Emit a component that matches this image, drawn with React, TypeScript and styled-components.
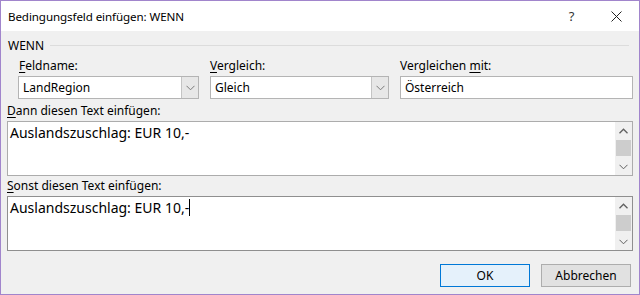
import styled, { createGlobalStyle } from "styled-components"

const GlobalStyle = createGlobalStyle`
    html, body {
        margin: 0;
        padding: 0;
        background: #ffffff;
    }
    * {
        box-sizing: border-box;
    }
`

// JANELA
const Janela = styled.div`
    width: 640px;
    height: 295px;
    border: 1px solid #a185cc;
    background-color: #f0f0f0;
    display: flex;
    flex-direction: column;
    font-family: 'Noto Sans', 'Open Sans', sans-serif;
    font-size: 12px;
    color: #000;
    overflow: hidden;
`
const BarraTitulo = styled.div`
    height: 30px;
    flex-shrink: 0;
    background-color: #fff;
    display: flex;
    align-items: center;
    padding-left: 7px;
`
const Titulo = styled.div`
    flex: 1;
    font-size: 11.6px;
    letter-spacing: -0.1px;
`
const BotaoTitulo = styled.div`
    width: 45px;
    height: 30px;
    display: flex;
    align-items: center;
    justify-content: center;
    color: #333;
    font-size: 13px;
`

const Corpo = styled.div`
    flex: 1;
    display: flex;
    flex-direction: column;
    padding: 6px 6px 0 6px;
`

// GRUPO WENN
const Grupo = styled.div`
    display: flex;
    align-items: center;
    gap: 6px;
    height: 16px;
    padding-left: 1px;
`
const GrupoLinha = styled.div`
    flex: 1;
    height: 1px;
    background-color: #dcdcdc;
    margin-right: 4px;
`

const Campos = styled.div`
    display: grid;
    grid-template-columns: 181px 179px 233px;
    column-gap: 11px;
    padding-left: 11px;
    margin-top: 6px;
`
const Campo = styled.div`
    display: flex;
    flex-direction: column;
`
const Rotulo = styled.div`
    height: 17px;
    line-height: 14px;
    padding-left: ${(p: { $recuo?: number }) => p.$recuo ?? 0}px;
`
const Sublinhado = styled.span`
    text-decoration: underline;
    text-underline-offset: 2px;
`

const Caixa = styled.div`
    height: 23px;
    border: 1px solid #b4b4b4;
    background-color: #fff;
    display: flex;
    align-items: stretch;
`
const CaixaTexto = styled.div`
    flex: 1;
    display: flex;
    align-items: center;
    padding-left: 4px;
`
const CaixaSeta = styled.div`
    width: 17px;
    border-left: 1px solid #c4c4c4;
    background-color: #e7e7e7;
    display: flex;
    align-items: center;
    justify-content: center;
`

// AREAS DE TEXTO
const Bloco = styled.div`
    display: flex;
    flex-direction: column;
    margin-top: ${(p: { $topo: number }) => p.$topo}px;
`
const AreaTexto = styled.div`
    height: 55px;
    width: 626px;
    border: 1px solid ${(p: { $foco?: boolean }) => (p.$foco ? "#8f8f8f" : "#acacac")};
    background-color: #fff;
    display: flex;
`
const AreaConteudo = styled.div`
    flex: 1;
    padding: 1px 2px;
    font-size: 14px;
    line-height: 19px;
`
const Cursor = styled.span`
    display: inline-block;
    width: 1px;
    height: 17px;
    background-color: #000;
    vertical-align: -3px;
`
const Rolagem = styled.div`
    width: 17px;
    background-color: #f0f0f0;
    display: flex;
    flex-direction: column;
    align-items: center;
    justify-content: space-between;
`
const RolagemSeta = styled.div`
    height: 17px;
    width: 17px;
    display: flex;
    align-items: center;
    justify-content: center;
`
const RolagemPolegar = styled.div`
    width: 15px;
    flex: 1;
    background-color: #cdcdcd;
`

// BOTOES
const Rodape = styled.div`
    display: flex;
    justify-content: flex-end;
    gap: 11px;
    margin-top: 13px;
    padding-right: 2px;
`
const Botao = styled.div`
    width: 90px;
    height: 23px;
    display: flex;
    align-items: center;
    justify-content: center;
    border: 1px solid ${(p: { $padrao?: boolean }) => (p.$padrao ? "#0078d7" : "#adadad")};
    background-color: ${(p: { $padrao?: boolean }) => (p.$padrao ? "#e5f1fb" : "#e1e1e1")};
`

function SetaBaixo({ cor = "#7a7a7a" }: { cor?: string }) {
    return (
        <svg width="9" height="6" viewBox="0 0 9 6">
            <path d="M0.5 0.8 L4.5 4.8 L8.5 0.8" fill="none" stroke={cor} strokeWidth="1" />
        </svg>
    )
}
function SetaCima() {
    return (
        <svg width="9" height="6" viewBox="0 0 9 6">
            <path d="M0.5 5.2 L4.5 1.2 L8.5 5.2" fill="none" stroke="#606060" strokeWidth="1.3" />
        </svg>
    )
}

function BarraRolagem() {
    return (
        <Rolagem>
            <RolagemSeta><SetaCima /></RolagemSeta>
            <RolagemPolegar style={{ marginTop: 1, marginBottom: 2 }} />
            <RolagemSeta><SetaBaixo cor="#606060" /></RolagemSeta>
        </Rolagem>
    )
}

function App() {
    return (
        <>
            <GlobalStyle />
            <Janela>
                <BarraTitulo>
                    <Titulo>Bedingungsfeld einfügen: WENN</Titulo>
                    <BotaoTitulo>?</BotaoTitulo>
                    <BotaoTitulo>
                        <svg width="11" height="11" viewBox="0 0 11 11">
                            <path d="M0.5 0.5 L10.5 10.5 M10.5 0.5 L0.5 10.5" stroke="#222" strokeWidth="1" />
                        </svg>
                    </BotaoTitulo>
                </BarraTitulo>

                <Corpo>
                    <Grupo>
                        <span>WENN</span>
                        <GrupoLinha />
                    </Grupo>

                    <Campos>
                        <Campo>
                            <Rotulo $recuo={1}><Sublinhado>F</Sublinhado>eldname:</Rotulo>
                            <Caixa>
                                <CaixaTexto>LandRegion</CaixaTexto>
                                <CaixaSeta><SetaBaixo /></CaixaSeta>
                            </Caixa>
                        </Campo>
                        <Campo>
                            <Rotulo><Sublinhado>V</Sublinhado>ergleich:</Rotulo>
                            <Caixa>
                                <CaixaTexto>Gleich</CaixaTexto>
                                <CaixaSeta><SetaBaixo /></CaixaSeta>
                            </Caixa>
                        </Campo>
                        <Campo>
                            <Rotulo>Vergleichen <Sublinhado>m</Sublinhado>it:</Rotulo>
                            <Caixa>
                                <CaixaTexto>Österreich</CaixaTexto>
                            </Caixa>
                        </Campo>
                    </Campos>

                    <Bloco $topo={5}>
                        <Rotulo><Sublinhado>D</Sublinhado>ann diesen Text einfügen:</Rotulo>
                        <AreaTexto>
                            <AreaConteudo>Auslandszuschlag: EUR 10,-</AreaConteudo>
                            <BarraRolagem />
                        </AreaTexto>
                    </Bloco>

                    <Bloco $topo={3}>
                        <Rotulo><Sublinhado>S</Sublinhado>onst diesen Text einfügen:</Rotulo>
                        <AreaTexto $foco>
                            <AreaConteudo>Auslandszuschlag: EUR 10,-<Cursor /></AreaConteudo>
                            <BarraRolagem />
                        </AreaTexto>
                    </Bloco>

                    <Rodape>
                        <Botao $padrao>OK</Botao>
                        <Botao>Abbrechen</Botao>
                    </Rodape>
                </Corpo>
            </Janela>
        </>
    )
}

export default App
